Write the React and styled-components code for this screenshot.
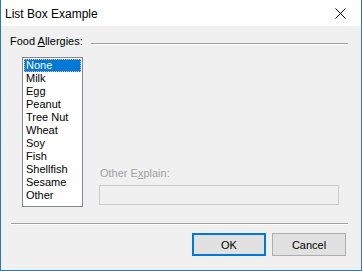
import React, { useState } from 'react'
import styled, { createGlobalStyle } from 'styled-components'

const GlobalStyle = createGlobalStyle`
  html, body {
    margin: 0;
    padding: 0;
    background: #ffffff;
  }
  body {
    font-family: "Liberation Sans", Arial, sans-serif;
  }
`

const foods = ['None', 'Milk', 'Egg', 'Peanut', 'Tree Nut', 'Wheat', 'Soy', 'Fish', 'Shellfish', 'Sesame', 'Other']

const App = () => {
  const [selected, setSelected] = useState('None')

  return (
    <>
      <GlobalStyle />
      <Window>
        <TitleBar>
          <Title>List Box Example</Title>
          <CloseButton>
            <svg width="11" height="11" viewBox="0 0 11 11">
              <path d="M0.5 0.5 L10.5 10.5 M10.5 0.5 L0.5 10.5" stroke="#000" strokeWidth="1" fill="none" />
            </svg>
          </CloseButton>
        </TitleBar>
        <Body>
          <GroupHeader>
            <GroupLabel>
              Food <u>A</u>llergies:
            </GroupLabel>
            <EtchedLine />
          </GroupHeader>
          <Row>
            <ListBox>
              {foods.map((food) => (
                <ListItem key={food} selected={food === selected} onClick={() => setSelected(food)}>
                  {food}
                </ListItem>
              ))}
            </ListBox>
            <ExplainColumn>
              <DisabledLabel>
                Other E<u>x</u>plain:
              </DisabledLabel>
              <TextBox disabled />
            </ExplainColumn>
          </Row>
          <Separator />
          <ButtonRow>
            <Button primary>OK</Button>
            <Button>Cancel</Button>
          </ButtonRow>
        </Body>
      </Window>
    </>
  )
}

const Window = styled.div`
  width: 362px;
  height: 271px;
  box-sizing: border-box;
  border: 1px solid #2b7aa8;
  border-top: none;
  display: flex;
  flex-direction: column;
  background: #f0f0f0;
`
const TitleBar = styled.div`
  height: 26px;
  flex: none;
  background: #ffffff;
  display: flex;
  align-items: center;
  justify-content: space-between;
  padding: 0 15px 0 4px;
`
const Title = styled.span`
  font-size: 12px;
  color: #000000;
  padding-top: 1px;
`
const CloseButton = styled.span`
  display: flex;
  align-items: center;
  margin-top: 1px;
`
const Body = styled.div`
  flex: 1;
  display: flex;
  flex-direction: column;
  padding: 9px 13px 0 9px;
  font-size: 11px;
  color: #000000;
`
const GroupHeader = styled.div`
  display: flex;
  align-items: center;
  height: 13px;
  line-height: 13px;
`
const GroupLabel = styled.span`
  white-space: nowrap;
`
const EtchedLine = styled.div`
  flex: 1;
  margin: 4px 0 0 8px;
  height: 0;
  border-top: 1px solid #a0a0a0;
  border-bottom: 1px solid #ffffff;
`
const Row = styled.div`
  display: flex;
  align-items: flex-end;
  margin: 9px 0 0 12px;
`
const ListBox = styled.div`
  width: 61px;
  height: 150px;
  box-sizing: border-box;
  border: 1px solid #828790;
  background: #ffffff;
  padding: 1px;
  display: flex;
  flex-direction: column;
`
const ListItem = styled.div`
  height: 13px;
  line-height: 13px;
  padding-left: 2px;
  box-sizing: border-box;
  background: ${({ selected }) => (selected ? '#0078d7' : 'transparent')};
  color: ${({ selected }) => (selected ? '#ffffff' : '#000000')};
  outline: ${({ selected }) => (selected ? '1px dotted #f0c080' : 'none')};
  outline-offset: -1px;
  cursor: default;
`
const ExplainColumn = styled.div`
  display: flex;
  flex-direction: column;
  margin: 0 0 2px 16px;
`
const DisabledLabel = styled.span`
  color: #a0a0a0;
  line-height: 13px;
  margin-left: 1px;
`
const TextBox = styled.input`
  width: 240px;
  height: 20px;
  box-sizing: border-box;
  margin: 5px 0 0;
  border: 1px solid #cccccc;
  background: #f0f0f0;
  outline: none;
`
const Separator = styled.div`
  margin: 16px 0 0 1px;
  height: 0;
  border-top: 1px solid #a0a0a0;
  border-bottom: 1px solid #ffffff;
`
const ButtonRow = styled.div`
  display: flex;
  justify-content: flex-end;
  gap: 6px;
  margin: 8px 2px 0 0;
`
const Button = styled.button`
  width: 74px;
  height: 23px;
  box-sizing: border-box;
  font-family: "Liberation Sans", Arial, sans-serif;
  font-size: 11px;
  color: #000000;
  background: #e1e1e1;
  border: ${({ primary }) => (primary ? '2px solid #0078d7' : '1px solid #adadad')};
  padding: 0;
  border-radius: 0;
`

export default App
